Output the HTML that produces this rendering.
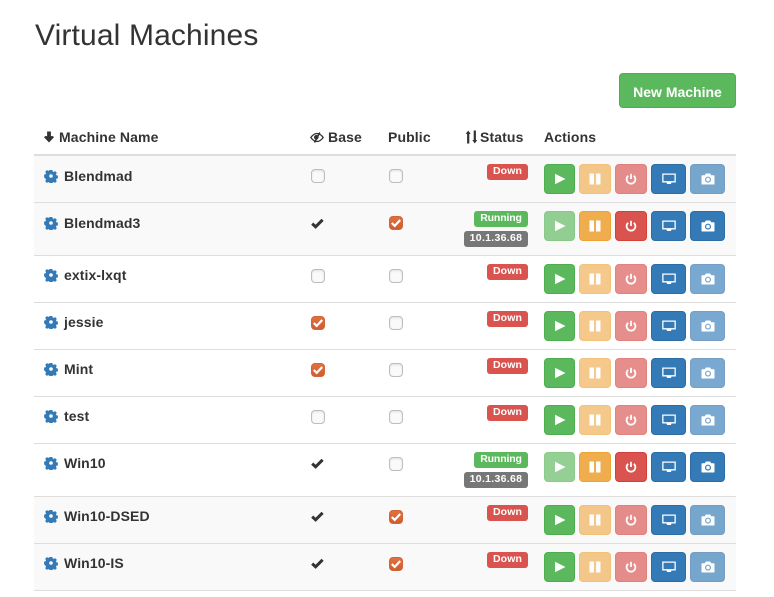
<!DOCTYPE html>
<html><head><meta charset="utf-8"><style>
html,body{margin:0;padding:0;background:#fff}
body{position:relative;width:774px;height:597px;overflow:hidden;font-family:"Liberation Sans",sans-serif;font-size:14px;color:#333}
h1{position:absolute;left:35px;top:19px;margin:0;font-size:30px;line-height:33px;font-weight:400;white-space:nowrap;letter-spacing:.14px}
.new{position:absolute;left:619px;top:73px;width:117px;height:35px;box-sizing:border-box;background:#5cb85c;border:1px solid #4cae4c;border-radius:4px;color:#fff;font-weight:700;line-height:36px;text-align:center}
.h{position:absolute;top:127px;line-height:20px;font-weight:700;white-space:nowrap;letter-spacing:.12px}
.hr{position:absolute;left:34px;top:154px;width:702px;height:2px;background:#ddd}
.r{position:absolute;left:34px;width:702px;box-sizing:border-box;border-bottom:1px solid #ddd}
.g{background:#f9f9f9}
.r>*{position:absolute}
.n{left:30px;top:10px;line-height:20px;font-weight:700;white-space:nowrap;letter-spacing:.1px}
.gear{left:10px;top:13px;width:14px;height:14px}
.t .n,.t .gear{margin-top:-1px}
.cb{top:13px;width:14px;height:14px;box-sizing:border-box;border:1px solid #bdbdbd;border-radius:4px;background:#fafafa;box-shadow:inset 0 1px 2px rgba(0,0,0,.1)}
.b1{left:277px}.b2{left:355px}
.on{background:linear-gradient(#e2703f,#cf5d30);border-color:#d2643a;box-shadow:none}
.on svg{position:absolute;left:1px;top:1px;width:10px;height:10px}
.tick{left:277px;top:15px;width:13px;height:11px}
.t .tick{top:14px}
.l{height:16px;border-radius:3px;color:#fff;font-size:10.5px;font-weight:700;line-height:14px;text-align:center;white-space:nowrap}
.d{left:453px;top:8px;width:41px;background:#d9534f;letter-spacing:.1px}
.u{left:440px;top:8px;width:54px;background:#5cb85c;letter-spacing:-.15px}
.i{left:430px;top:28px;width:64px;background:#777;letter-spacing:.3px}
.a{top:8px;height:30px;box-sizing:border-box;border:1px solid;border-radius:4px}
.a svg{position:absolute;left:50%;top:50%;transform:translate(-50%,-50%)}
.p1{left:510px;width:31px;background:#5cb85c;border-color:#4cae4c}
.p2{left:545px;width:32px;background:#f0ad4e;border-color:#eea236}
.p3{left:581px;width:32px;background:#d9534f;border-color:#d43f3a}
.p4{left:617px;width:35px;background:#337ab7;border-color:#2e6da4}
.p5{left:656px;width:35px;background:#337ab7;border-color:#2e6da4}
.o{opacity:.65}
</style></head><body>
<svg width="0" height="0" style="position:absolute">
<symbol id="gear" viewBox="0 0 14 14"><path fill="#337ab7" fill-rule="evenodd" d="M5.700 1h2.600l.4 1.500 1 .4 1.400-.8 1.700 1.700-.8 1.400.4 1 1.500.4v2.800l-1.500.4-.4 1 .8 1.400-1.700 1.700-1.400-.8-1 .4-.4 1.500H5.700l-.4-1.500-1-.4-1.400.8-1.700-1.700.8-1.400-.4-1L.1 8.400V5.600l1.500-.4.4-1-.8-1.400 1.700-1.700 1.400.8 1-.4zM7 5.200a1.800 1.800 0 1 0 0 3.600 1.800 1.800 0 0 0 0-3.600z"/></symbol>
<symbol id="tick" viewBox="0 0 13 11"><path fill="none" stroke="#333" stroke-width="3" d="M1.200 5.600l3.400 3.200 7-7"/></symbol>
<symbol id="wt" viewBox="0 0 10 10"><path fill="none" stroke="#fff" stroke-width="2.200" d="M.8 5l2.900 2.900L9.200 2"/></symbol>
<symbol id="play" viewBox="0 0 12 12"><path fill="#fff" d="M1 0.800L11.500 6 1 11.200z"/></symbol>
<symbol id="pause" viewBox="0 0 12 12"><path fill="#fff" d="M0.500 0.500h4.500v11H0.500zM7 0.500h4.500v11H7z"/></symbol>
<symbol id="pow" viewBox="0 0 12 12"><path fill="none" stroke="#fff" stroke-width="1.800" d="M3.200 2.800a4.400 4.400 0 1 0 5.600 0"/><path stroke="#fff" stroke-width="1.800" d="M6 .8v5.200"/></symbol>
<symbol id="mon" viewBox="0 0 14 12"><path fill="#fff" fill-rule="evenodd" d="M0.200 0.500h13.600v9h-4.300l-.6 1.500H5.100l-.6-1.500H.2zM1.500 1.800v6.300h11V1.800z"/></symbol>
<symbol id="cam" viewBox="0 0 14 12"><path fill="#fff" fill-rule="evenodd" d="M1.300 2.200h2.500l1-1.700h4.400l1 1.700h2.500c.5 0 .8.300.8.800v7.700c0 .5-.3.800-.8.800H1.300c-.5 0-.8-.3-.8-.8V3c0-.5.300-.8.800-.8zM7 3.600a3 3 0 1 0 0 6 3 3 0 0 0 0-6zm0 1.200a1.800 1.800 0 1 1 0 3.600 1.800 1.800 0 0 1 0-3.600z"/></symbol>
</svg>

<h1>Virtual Machines</h1>
<div class="new">New Machine</div>

<svg style="position:absolute;left:43px;top:131px" width="12" height="12" viewBox="0 0 12 12"><path fill="#333" d="M4.100 0.500h3.800v4.600h2l1.100 1.100L6 11.500 1 6.200l1.100-1.100h2z"/></svg>
<div class="h" style="left:59px">Machine Name</div>
<svg style="position:absolute;left:310px;top:132px" width="14" height="11" viewBox="0 0 14 11"><path fill="none" stroke="#333" stroke-width="1.300" d="M0.800 5.500C3 2.500 5 1.500 7 1.500s4 1 6.200 4C11 8.500 9 9.500 7 9.500s-4-1-6.200-4z"/><path stroke="#333" stroke-width="1.600" d="M9.800 0.500L4.500 10.500"/><circle cx="6.300" cy="5.300" r="2.300" fill="#333"/></svg>
<div class="h" style="left:328px">Base</div>
<div class="h" style="left:388px">Public</div>
<svg style="position:absolute;left:466px;top:130px" width="11" height="14" viewBox="0 0 11 14"><path fill="#333" d="M2.200 0.500L4.700 4H3.300v9.500H1.100V4H-.3zM8.800 13.500L6.300 10h1.400V0.500h2.200V10h1.400z"/></svg>
<div class="h" style="left:480px">Status</div>
<div class="h" style="left:544px">Actions</div>
<div class="hr"></div>

<div class="r g" style="top:156px;height:47px">
<svg class="gear"><use href="#gear"/></svg><div class="n">Blendmad</div>
<div class="cb b1"></div><div class="cb b2"></div>
<div class="l d">Down</div>
<div class="a p1"><svg width="12" height="12"><use href="#play"/></svg></div><div class="a p2 o"><svg width="12" height="12"><use href="#pause"/></svg></div><div class="a p3 o"><svg width="12" height="12"><use href="#pow"/></svg></div><div class="a p4"><svg width="14" height="12"><use href="#mon"/></svg></div><div class="a p5 o"><svg width="14" height="12"><use href="#cam"/></svg></div>
</div>

<div class="r g" style="top:203px;height:53px">
<svg class="gear"><use href="#gear"/></svg><div class="n">Blendmad3</div>
<svg class="tick"><use href="#tick"/></svg><div class="cb b2 on"><svg><use href="#wt"/></svg></div>
<div class="l u">Running</div><div class="l i">10.1.36.68</div>
<div class="a p1 o"><svg width="12" height="12"><use href="#play"/></svg></div><div class="a p2"><svg width="12" height="12"><use href="#pause"/></svg></div><div class="a p3"><svg width="12" height="12"><use href="#pow"/></svg></div><div class="a p4"><svg width="14" height="12"><use href="#mon"/></svg></div><div class="a p5"><svg width="14" height="12"><use href="#cam"/></svg></div>
</div>

<div class="r t" style="top:256px;height:47px">
<svg class="gear"><use href="#gear"/></svg><div class="n">extix-lxqt</div>
<div class="cb b1"></div><div class="cb b2"></div>
<div class="l d">Down</div>
<div class="a p1"><svg width="12" height="12"><use href="#play"/></svg></div><div class="a p2 o"><svg width="12" height="12"><use href="#pause"/></svg></div><div class="a p3 o"><svg width="12" height="12"><use href="#pow"/></svg></div><div class="a p4"><svg width="14" height="12"><use href="#mon"/></svg></div><div class="a p5 o"><svg width="14" height="12"><use href="#cam"/></svg></div>
</div>

<div class="r t" style="top:303px;height:47px">
<svg class="gear"><use href="#gear"/></svg><div class="n">jessie</div>
<div class="cb b1 on"><svg><use href="#wt"/></svg></div><div class="cb b2"></div>
<div class="l d">Down</div>
<div class="a p1"><svg width="12" height="12"><use href="#play"/></svg></div><div class="a p2 o"><svg width="12" height="12"><use href="#pause"/></svg></div><div class="a p3 o"><svg width="12" height="12"><use href="#pow"/></svg></div><div class="a p4"><svg width="14" height="12"><use href="#mon"/></svg></div><div class="a p5 o"><svg width="14" height="12"><use href="#cam"/></svg></div>
</div>

<div class="r t" style="top:350px;height:47px">
<svg class="gear"><use href="#gear"/></svg><div class="n">Mint</div>
<div class="cb b1 on"><svg><use href="#wt"/></svg></div><div class="cb b2"></div>
<div class="l d">Down</div>
<div class="a p1"><svg width="12" height="12"><use href="#play"/></svg></div><div class="a p2 o"><svg width="12" height="12"><use href="#pause"/></svg></div><div class="a p3 o"><svg width="12" height="12"><use href="#pow"/></svg></div><div class="a p4"><svg width="14" height="12"><use href="#mon"/></svg></div><div class="a p5 o"><svg width="14" height="12"><use href="#cam"/></svg></div>
</div>

<div class="r t" style="top:397px;height:47px">
<svg class="gear"><use href="#gear"/></svg><div class="n">test</div>
<div class="cb b1"></div><div class="cb b2"></div>
<div class="l d">Down</div>
<div class="a p1"><svg width="12" height="12"><use href="#play"/></svg></div><div class="a p2 o"><svg width="12" height="12"><use href="#pause"/></svg></div><div class="a p3 o"><svg width="12" height="12"><use href="#pow"/></svg></div><div class="a p4"><svg width="14" height="12"><use href="#mon"/></svg></div><div class="a p5 o"><svg width="14" height="12"><use href="#cam"/></svg></div>
</div>

<div class="r t" style="top:444px;height:53px">
<svg class="gear"><use href="#gear"/></svg><div class="n">Win10</div>
<svg class="tick"><use href="#tick"/></svg><div class="cb b2"></div>
<div class="l u">Running</div><div class="l i">10.1.36.68</div>
<div class="a p1 o"><svg width="12" height="12"><use href="#play"/></svg></div><div class="a p2"><svg width="12" height="12"><use href="#pause"/></svg></div><div class="a p3"><svg width="12" height="12"><use href="#pow"/></svg></div><div class="a p4"><svg width="14" height="12"><use href="#mon"/></svg></div><div class="a p5"><svg width="14" height="12"><use href="#cam"/></svg></div>
</div>

<div class="r g t" style="top:497px;height:47px">
<svg class="gear"><use href="#gear"/></svg><div class="n">Win10-DSED</div>
<svg class="tick"><use href="#tick"/></svg><div class="cb b2 on"><svg><use href="#wt"/></svg></div>
<div class="l d">Down</div>
<div class="a p1"><svg width="12" height="12"><use href="#play"/></svg></div><div class="a p2 o"><svg width="12" height="12"><use href="#pause"/></svg></div><div class="a p3 o"><svg width="12" height="12"><use href="#pow"/></svg></div><div class="a p4"><svg width="14" height="12"><use href="#mon"/></svg></div><div class="a p5 o"><svg width="14" height="12"><use href="#cam"/></svg></div>
</div>

<div class="r g t" style="top:544px;height:47px">
<svg class="gear"><use href="#gear"/></svg><div class="n">Win10-IS</div>
<svg class="tick"><use href="#tick"/></svg><div class="cb b2 on"><svg><use href="#wt"/></svg></div>
<div class="l d">Down</div>
<div class="a p1"><svg width="12" height="12"><use href="#play"/></svg></div><div class="a p2 o"><svg width="12" height="12"><use href="#pause"/></svg></div><div class="a p3 o"><svg width="12" height="12"><use href="#pow"/></svg></div><div class="a p4"><svg width="14" height="12"><use href="#mon"/></svg></div><div class="a p5 o"><svg width="14" height="12"><use href="#cam"/></svg></div>
</div>
</body></html>
